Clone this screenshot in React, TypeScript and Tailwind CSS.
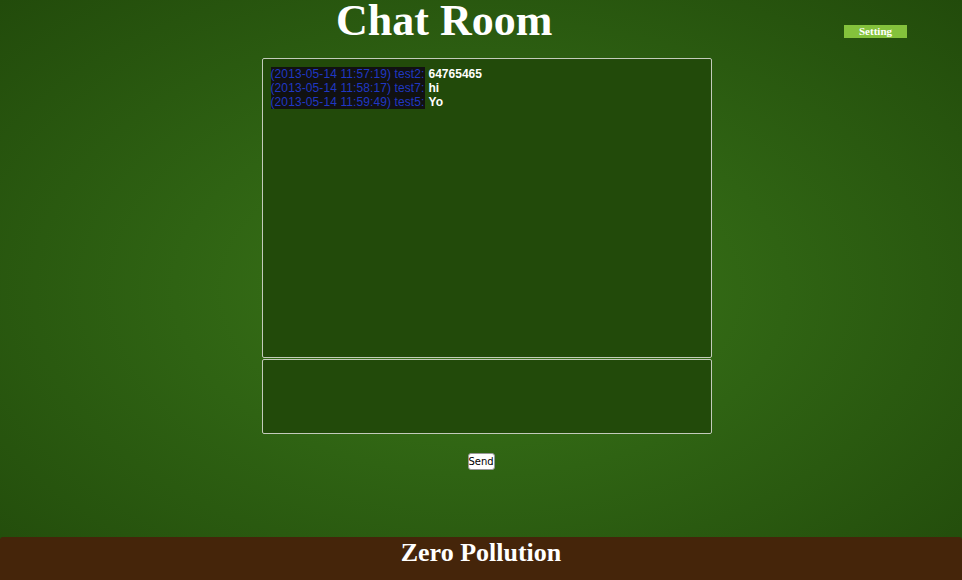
export default function App() {
  const messages = [
    { time: "(2013-05-14 11:57:19) test2:", text: "64765465" },
    { time: "(2013-05-14 11:58:17) test7:", text: "hi" },
    { time: "(2013-05-14 11:59:49) test5:", text: "Yo" },
  ];

  return (
    <div className="w-[962px] h-[580px] flex flex-col bg-[radial-gradient(ellipse_at_center,#3b7618_0%,#2f6313_45%,#224b0b_100%)] overflow-hidden">
      <div className="flex-1 flex flex-col">
        {/* header */}
        <div className="relative h-[58px]">
          <h1 className="pl-[336px] text-[44px] leading-[41px] font-bold text-white font-['Liberation_Serif',serif]">
            Chat Room
          </h1>
          <button className="absolute left-[844px] top-[25px] w-[63px] h-[13px] bg-[#84c23c] text-white text-[11px] leading-[13px] font-bold font-['Liberation_Serif',serif]">
            Setting
          </button>
        </div>

        {/* chat area */}
        <div className="flex flex-col items-center ml-[11px]">
          <div className="w-[450px] h-[300px] border border-[#c3cbbb] rounded-[2px] bg-[#224a0a] px-[8px] py-[8px] font-['Liberation_Sans',Arial,sans-serif] text-[12px] leading-[14px] font-bold">
            {messages.map((m) => (
              <div key={m.time}>
                <span className="bg-[#111111] text-[#2038c4] font-normal tracking-[0.1px]">{m.time}</span>
                <span className="ml-[4px] text-white">{m.text}</span>
              </div>
            ))}
          </div>
          <div className="mt-[1px] w-[450px] h-[75px] border border-[#c3cbbb] rounded-[2px] bg-[#224a0a]" />
        </div>
        <div className="flex justify-center mt-[19px]">
          <button className="w-[27px] h-[17px] bg-white rounded-[3px] border border-[#999] text-[10px] leading-[15px] text-black font-['DejaVu_Sans',sans-serif]">
            Send
          </button>
        </div>
      </div>

      {/* footer */}
      <div className="h-[43px] bg-[#45250a] rounded-tl-[3px] rounded-tr-[3px] flex justify-center">
        <span className="text-[26px] leading-[32px] font-bold text-white font-['Liberation_Serif',serif]">
          Zero Pollution
        </span>
      </div>
    </div>
  );
}
